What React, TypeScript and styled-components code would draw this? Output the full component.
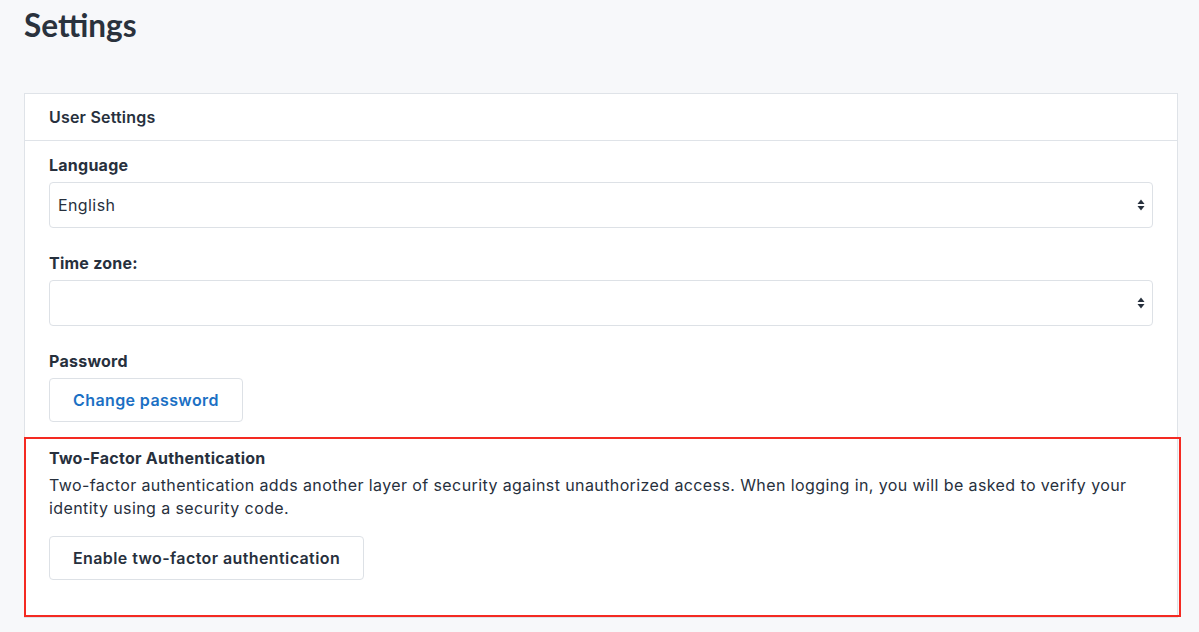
import React from "react";
import styled, { createGlobalStyle } from "styled-components";

const Global = createGlobalStyle`
  html, body { margin: 0; padding: 0; background: #f7f8fa; }
  body { font-family: Inter, "Noto Sans", sans-serif; color: #27303d; }
  * { box-sizing: border-box; }
`;

const Page = styled.div`
  padding: 0 21px 0 24px;
`;

const Title = styled.h1`
  margin: 0;
  padding-top: 6px;
  height: 93px;
  font-family: Lato, "Open Sans", sans-serif;
  font-weight: 700;
  font-size: 31.5px;
  line-height: 38px;
  color: #2a323d;
`;

const Card = styled.section`
  background: #fff;
  border: 1px solid #dfe3e8;
`;

const CardHeader = styled.div`
  padding: 12px 24px;
  border-bottom: 1px solid #dfe3e8;
  font-size: 16px;
  font-weight: 600;
  letter-spacing: 0.2px;
  line-height: 22px;
`;

const CardBody = styled.div`
  padding: 12px 24px 0;
`;

const Field = styled.div<{ $last?: boolean }>`
  margin-bottom: ${(p) => (p.$last ? "15px" : "23px")};
`;

const Label = styled.div<{ $tight?: boolean }>`
  font-size: 16px;
  font-weight: 700;
  letter-spacing: 0.25px;
  line-height: 24px;
  margin-bottom: ${(p) => (p.$tight ? "0" : "5px")};
`;

const SelectWrap = styled.div`
  position: relative;
`;

const Select = styled.select`
  appearance: none;
  -webkit-appearance: none;
  width: 100%;
  height: 46px;
  padding: 0 28px 0 8px;
  border: 1px solid #dde1e6;
  border-radius: 4px;
  background: #fff;
  font-family: inherit;
  font-size: 16px;
  letter-spacing: 0.4px;
  color: #27303d;
  outline: none;
`;

const Arrows = styled.svg`
  position: absolute;
  right: 4px;
  top: 50%;
  transform: translateY(-50%);
  pointer-events: none;
`;

const Button = styled.button<{ $primary?: boolean }>`
  height: 44px;
  padding: 0 23px;
  border: 1px solid #dde1e6;
  border-radius: 4px;
  background: #fff;
  font-family: inherit;
  font-size: 16px;
  font-weight: 600;
  letter-spacing: 0.4px;
  color: ${(p) => (p.$primary ? "#1b70c4" : "#27303d")};
  cursor: pointer;
`;

const TwoFactor = styled.div`
  position: relative;
  padding: 9px 0 37px;
  &::after {
    content: "";
    position: absolute;
    top: 0;
    bottom: 0;
    left: -25px;
    right: -28px;
    border: 2px solid #f42a22;
    pointer-events: none;
  }
`;

const Para = styled.p`
  margin: 4px 0 16px;
  font-size: 16px;
  letter-spacing: 0.4px;
  line-height: 23px;
`;

function SelectArrows() {
  return (
    <Arrows width="16" height="14" viewBox="0 0 16 14">
      <path d="M4.5 6 L8 1.5 L11.5 6 Z" fill="#27303d" />
      <path d="M4.5 8 L8 12.5 L11.5 8 Z" fill="#27303d" />
    </Arrows>
  );
}

export default function App() {
  return (
    <>
      <Global />
      <Page>
        <Title>Settings</Title>
        <Card>
          <CardHeader>User Settings</CardHeader>
          <CardBody>
            <Field>
              <Label>Language</Label>
              <SelectWrap>
                <Select defaultValue="en">
                  <option value="en">English</option>
                </Select>
                <SelectArrows />
              </SelectWrap>
            </Field>
            <Field>
              <Label>Time zone:</Label>
              <SelectWrap>
                <Select defaultValue="">
                  <option value=""></option>
                </Select>
                <SelectArrows />
              </SelectWrap>
            </Field>
            <Field $last>
              <Label>Password</Label>
              <Button $primary>Change password</Button>
            </Field>
            <TwoFactor>
              <Label $tight>Two-Factor Authentication</Label>
              <Para>
                Two-factor authentication adds another layer of security against unauthorized access. When
                logging in, you will be asked to verify your identity using a security code.
              </Para>
              <Button>Enable two-factor authentication</Button>
            </TwoFactor>
          </CardBody>
        </Card>
      </Page>
    </>
  );
}
